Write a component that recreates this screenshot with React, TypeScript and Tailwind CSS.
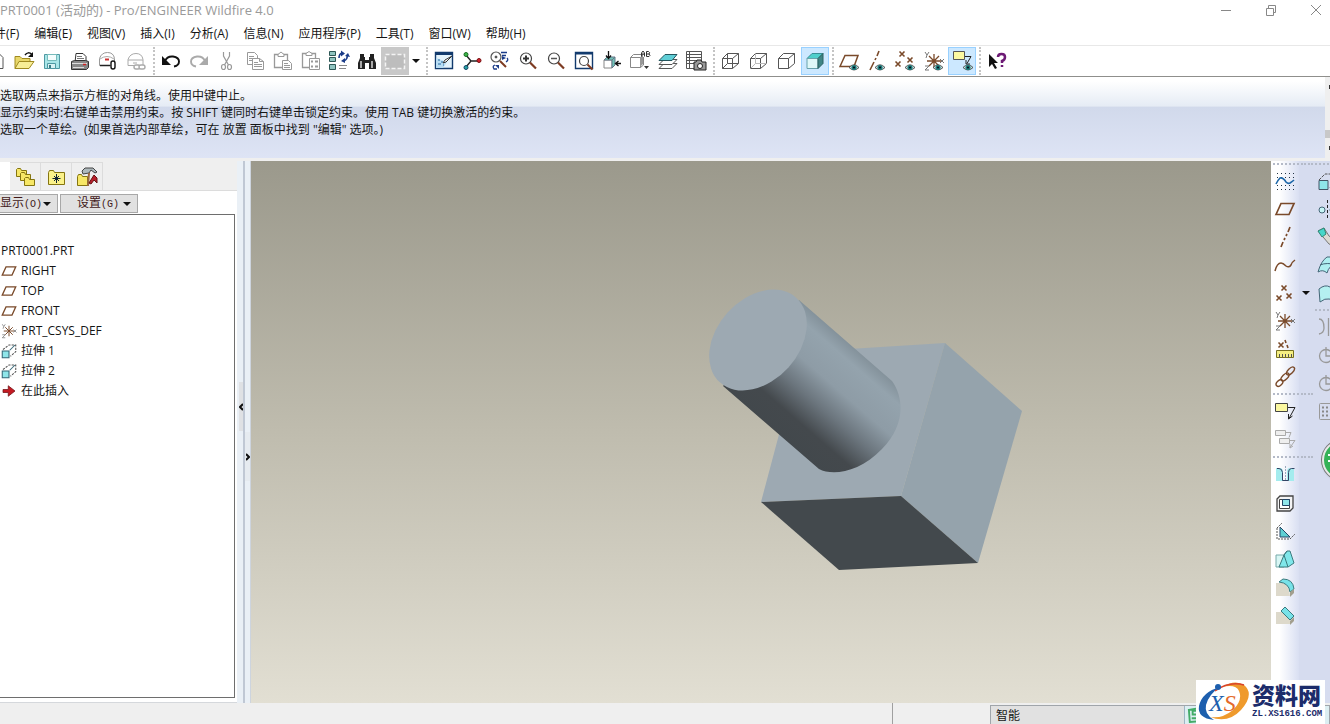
import type { ReactNode } from 'react';
import { clsx } from 'clsx';

interface IconProps {
    children: ReactNode;
    className?: string;
}

// Shared 24x24 canvas for every toolbar glyph
const Icon = ({ children, className }: IconProps) => (
    <svg
        viewBox="0 0 24 24"
        className={clsx('shrink-0', className ?? 'size-6')}
        fill="none"
        stroke="#555"
        strokeWidth="1"
        aria-hidden="true"
    >
        {children}
    </svg>
);

const BROWN = '#7a4a2a';

const Eye = () => (
    <g stroke="none">
        <path d="M9 18.5q5-5.500 10 0q-5 5-10 0z" fill="#cfe3e3" stroke="#333" strokeWidth=".8" />
        <circle cx="14" cy="18.500" r="2.600" fill="#1d7a78" />
        <circle cx="14" cy="18.500" r="1.100" fill="#012" />
    </g>
);

const Cross = ({ x, y, color = BROWN }: { x: number; y: number; color?: string }) => (
    <path d={`M${x - 2.5} ${y - 2.5}l5 5m0-5l-5 5`} stroke={color} strokeWidth="1.600" />
);

const Csys = () => (
    <>
        <path d="M5 12h14M12 5v14M7 7l10 10M17 7L7 17" stroke={BROWN} strokeWidth="1.300" />
        <path d="M3 3l2 3 2-3M5 6l-1 3M3 17h4l-4 4h4M18 10l4 4m0-4l-4 4" stroke="#777" />
    </>
);

const WireCube = ({ hidden }: { hidden?: string }) => (
    <>
        <path d="M3.500 9.500h10v10h-10zM3.500 9.500l5-5h11v10l-6 5M13.500 9.500l6-5" stroke="#555" />
        {hidden && <path d="M8.500 4.500v10h11M8.500 14.500l-5 5" stroke={hidden} />}
    </>
);

const icons = {
    newFile: <path d="M6 4.500h9l4 4v11H6z" fill="#fff" />,
    open: (
        <>
            <path d="M3 19.500v-12h5l2 2h8v3" fill="#e9d86a" stroke="#a08a20" />
            <path d="M3 19.500l4-7h15l-5 7z" fill="#f8ee96" stroke="#a08a20" />
            <path d="M13 6q3-4 7-.5" stroke="#111" strokeWidth="1.500" />
            <path d="M21 3v5h-5z" fill="#111" stroke="none" />
        </>
    ),
    save: (
        <>
            <path d="M4.500 5.500h15v14h-15z" fill="#a9e6e8" stroke="#4f98a2" />
            <path d="M7.500 5.500h9v6h-9z" fill="#f4fdfd" stroke="#7bb" />
            <path d="M7.500 14.500h8v5h-8z" fill="#d8f2f3" stroke="#4f98a2" />
            <path d="M9 16h2v3H9z" fill="#3a7e88" stroke="none" />
        </>
    ),
    print: (
        <>
            <path d="M8 4.500h7l3 3v6H7z" fill="#fff" stroke="#333" />
            <path d="M9 7.500h5M9 9.500h7M8 11.500h8" stroke="#777" />
            <path d="M3.500 12.500l3-1h11l3 1v6l-2 2h-15z" fill="#888" stroke="#333" />
            <path d="M4 14.500h15M5 18.500h11" stroke="#ddd" />
            <path d="M15 15.500h3" stroke="#c22" strokeWidth="1.500" />
        </>
    ),
    mail: (
        <>
            <path d="M3.500 16.500v-7q2-6 8-6t7 6v7z" fill="#fff" stroke="#999" />
            <path d="M4 10q7-5 14 0" stroke="#aaa" />
            <path d="M4 16.500h10" stroke="#222" strokeWidth="1.500" />
            <path d="M9 10.500h4" stroke="#c33" strokeWidth="2" />
            <rect x="15" y="12" width="4" height="8" rx="2" fill="#fff" stroke="#111" strokeWidth="1.400" />
        </>
    ),
    mailLink: (
        <g stroke="#aaa">
            <path d="M4 16.500v-6q2-6 8-6t7 6v6z" fill="#fff" />
            <path d="M4 11h15M9 14h4" />
            <rect x="10" y="16" width="6" height="4" rx="2" fill="#fff" strokeWidth="1.400" />
            <rect x="15" y="16" width="6" height="4" rx="2" fill="#fff" strokeWidth="1.400" />
        </g>
    ),
    undo: (
        <>
            <path d="M6 12q2-5 8-4.500 6 1 6 5t-5 5" stroke="#111" strokeWidth="1.900" />
            <path d="M3 7v9h9z" fill="#111" stroke="none" />
        </>
    ),
    redo: (
        <>
            <path d="M18 12q-2-5-8-4.500-6 1-6 5t5 5" stroke="#aaa" strokeWidth="1.900" />
            <path d="M21 7v9h-9z" fill="#aaa" stroke="none" />
        </>
    ),
    cut: (
        <g stroke="#999" strokeWidth="1.200">
            <path d="M8.500 3v4l5 9M14.500 3v4l-5 9" />
            <ellipse cx="8.500" cy="18" rx="2" ry="2.500" />
            <ellipse cx="14.500" cy="18" rx="2" ry="2.500" />
        </g>
    ),
    copy: (
        <g stroke="#999">
            <path d="M4.500 3.500h7l3 3v9h-10z" fill="#fff" />
            <path d="M6 7.500h5M6 9.500h7M6 11.500h7" />
            <path d="M9.500 9.500h7l4 3v8h-11z" fill="#fff" />
            <path d="M16.500 9.500v3h4M11 13.500h4M11 15.500h8M11 17.500h8" />
        </g>
    ),
    paste: (
        <g stroke="#999">
            <path d="M3.500 5.500h13v13h-13z" fill="#fff" strokeWidth="1.300" />
            <path d="M7 7.500v-2l3-2.500 3 2.500v2z" fill="#fff" />
            <path d="M11.500 11.500h6l3 3v6h-9z" fill="#fff" />
            <path d="M13 14.500h4M13 16.500h6M13 18.500h6" />
        </g>
    ),
    pasteSpecial: (
        <g stroke="#999">
            <path d="M3.500 4.500h13v14h-13z" fill="#fff" strokeWidth="1.300" />
            <path d="M7 6.500v-2l3-2 3 2v2z" fill="#fff" />
            <path d="M10.500 9.500h10v11h-10z" fill="#fff" />
            <path d="M12 12.500h2m2 0h3M12 17.500h2m2 0h3" strokeWidth="2" />
        </g>
    ),
    regenerate: (
        <>
            <path d="M2.500 2.500h6v4h-6zM2.500 8.500h6v4h-6zM2.500 15.500h6v5h-6z" fill="#8fc4c0" stroke="#2c5755" />
            <path d="M12 16.500h8M12 19.500h7" stroke="#888" />
            <path d="M12 9q0-4 3-5M20 6q1 4-3 6" stroke="#1b3c88" strokeWidth="1.600" />
            <path d="M14 1.500l4 3-4 3zM18 7l3-3 2 4zM18 9v5l-4-2z" fill="#1b3c88" stroke="none" />
        </>
    ),
    find: (
        <g fill="#222" stroke="none">
            <path d="M5 5h4v3h1v3h4V8h1V5h4v4l2 5v6h-7v-6h-4v6H3v-6l2-5z" />
            <path d="M5 12h2v7H5zM16 12h2v7h-2z" fill="#aaa" />
        </g>
    ),
    selectBox: <path d="M2.500 5.500h19v14h-19z" stroke="#f4f4f4" strokeWidth="1.500" strokeDasharray="4 2" fill="#bdbdbd" />,
    repaint: (
        <>
            <path d="M3.500 3.500h17v16h-17z" fill="#e4f3fb" stroke="#123a6d" strokeWidth="1.400" />
            <path d="M3 3h18v3H3z" fill="#123a6d" stroke="none" />
            <path d="M4 9l11 4-4 6H4z" fill="#b7dcf3" stroke="none" />
            <path d="M20 7l-6 6-3 1 2-3z" fill="#fff" stroke="#333" />
            <path d="M6 11h2m1 2h2m-5 2h3m2 1h1" stroke="#246aa0" />
        </>
    ),
    spin: (
        <>
            <path d="M6 6l5 6-5 6M11 12h9" stroke="#222" strokeWidth="1.400" />
            <circle cx="6" cy="5.500" r="2" fill="#3db54a" stroke="#176b20" />
            <circle cx="6" cy="18.500" r="2" fill="#28a3a5" stroke="#146" />
            <circle cx="19" cy="11.500" r="2" fill="#d21f2c" stroke="#711" />
        </>
    ),
    orient: (
        <>
            <circle cx="8" cy="8" r="5" stroke="#555" strokeWidth="1.200" />
            <circle cx="8" cy="8" r="1" fill="#222" />
            <path d="M12 12l6 6" stroke="#7d3b22" strokeWidth="2" />
            <path d="M13 3.500h6M14 6.500h4M19 9q2 2-1 4M7 16q-3 1-1 4l3 0" stroke="#1b3c88" strokeWidth="1.300" />
            <path d="M14 7v4l4-2zM7 16h4v4z" fill="#1b3c88" stroke="none" />
        </>
    ),
    zoomIn: (
        <>
            <circle cx="10" cy="9.500" r="5.500" stroke="#444" strokeWidth="1.200" />
            <path d="M7 9.500h6M10 6.500v6" stroke="#333" strokeWidth="2" />
            <path d="M14 13.500l6 6" stroke="#7d3b22" strokeWidth="2.200" />
        </>
    ),
    zoomOut: (
        <>
            <circle cx="10" cy="9.500" r="5.500" stroke="#444" strokeWidth="1.200" />
            <path d="M7 9.500h6" stroke="#555" strokeWidth="1.500" />
            <path d="M14 13.500l6 6" stroke="#7d3b22" strokeWidth="2.200" />
        </>
    ),
    refit: (
        <>
            <path d="M3.500 3.500h17v16h-17z" fill="#fff" stroke="#123a6d" strokeWidth="1.400" />
            <path d="M3 3h18v2.500H3z" fill="#123a6d" stroke="none" />
            <circle cx="12" cy="12" r="4.500" stroke="#444" strokeWidth="1.200" />
            <path d="M15.500 15.500l5 5" stroke="#7d3b22" strokeWidth="2" />
        </>
    ),
    reorient: (
        <>
            <path d="M4 11h8v8H4z" fill="#fff" stroke="#888" />
            <path d="M4 11l3-3h8l-3 3zM12 11l3-3v8l-3 3z" fill="#6fc5b8" stroke="#678" />
            <path d="M8.500 2v7M6 6.500l2.500 3 2.500-3M21 14.500h-5M18.500 12l-3 2.500 3 2.500" stroke="#111" strokeWidth="1.300" />
        </>
    ),
    savedViews: (
        <>
            <path d="M2.500 8.500h10v10h-10zM2.500 8.500l3-3h10l-3 3M15.500 8v8l-3 2.500" fill="#fff" stroke="#888" />
            <path d="M12 9l3-3v9l-3 3z" fill="#999" stroke="none" />
            <path d="M13.500 7.500V4l1.500-2 1.500 2v3.500M13.500 5h3M18.500 2.500v5H21q2-1 0-2.500 1.500-1.500-.5-2.500zM18.500 5H21" stroke="#333" />
            <path d="M16 17h5l-2.500 3z" fill="#333" stroke="none" />
        </>
    ),
    layers: (
        <>
            <path d="M3 19.500l5-5h13l-5 5z" fill="#fff" stroke="#555" />
            <path d="M3 15.500l5-5h13l-5 5z" fill="#fff" stroke="#555" />
            <path d="M3 11.500l6-6h12l-5 6z" fill="#5fced6" stroke="#24565e" />
        </>
    ),
    viewManager: (
        <>
            <path d="M2.500 2.500h15v17h-15zM2 5.500h15M2 8.500h15M2 11.500h15M2 14.500h8M5.500 2v17" stroke="#555" />
            <path d="M10 13h2l1-2h4l1 2h4v8H10z" fill="#999" stroke="#222" />
            <circle cx="16" cy="17" r="2.500" fill="#fff" stroke="#222" />
        </>
    ),
    wireframe: <WireCube hidden="#555" />,
    hiddenLine: <WireCube hidden="#bbb" />,
    noHidden: <WireCube />,
    shaded: (
        <>
            <path d="M4 9.500l5-5h11l-5 5z" fill="#4fcfcb" stroke="#3a8f96" />
            <path d="M4 9.500h11v10H4z" fill="#dff8f8" stroke="#68a2ac" />
            <path d="M15 9.500l5-5v10l-5 5z" fill="#3f8585" stroke="#2a6060" />
        </>
    ),
    planeEye: (
        <>
            <path d="M2 17.500l5-11h13l-4 11z" stroke={BROWN} strokeWidth="1.500" />
            <g transform="translate(2)"><Eye /></g>
        </>
    ),
    axisEye: (
        <>
            <path d="M13 2l-2 5m-1 2l-1 2m-1 2l-4 8" stroke={BROWN} strokeWidth="1.600" />
            <Eye />
        </>
    ),
    pointEye: (
        <>
            <Cross x={8} y={5} />
            <Cross x={4} y={15} />
            <Cross x={16} y={11} />
            <g transform="translate(2)"><Eye /></g>
        </>
    ),
    csysEye: (
        <>
            <Csys />
            <g transform="translate(2)"><Eye /></g>
        </>
    ),
    noteEye: (
        <>
            <path d="M3.500 2.500h11v8h-11z" fill="#fbf8a0" stroke="#555" />
            <path d="M15 7.500h6l-4 7M16 11v4h4" stroke="#222" />
            <g transform="translate(4)"><Eye /></g>
        </>
    ),
    help: (
        <>
            <path d="M4 5v13l3-3 3 5 2-1-3-5h4z" fill="#111" stroke="none" />
            <path d="M13 8q0-3 3.500-3t3.500 3-3 4v2M17 16v2" stroke="#6d1a75" strokeWidth="2.500" />
        </>
    ),
    sketch: (
        <>
            <path d="M4 4.500h17M4 8.500h17M4 16.500h17M4 20.500h17" stroke="#234" strokeDasharray="1 3" />
            <path d="M3 15q2-4 4-6 3-1 6 4 2 2 4 1 3-2 4-3" stroke="#1c66a8" strokeWidth="1.600" />
        </>
    ),
    plane: <path d="M3 17.500l5-11h13l-5 11z" stroke={BROWN} strokeWidth="1.700" />,
    axis: <path d="M17 2l-2 5m-1 2l-1 2m-1 2l-1 2m-1 2l-2 5" stroke={BROWN} strokeWidth="1.700" />,
    curve: <path d="M2 18q2-8 6-8 2 0 5 3 3 2 5-1 1-3 4-5" stroke={BROWN} strokeWidth="1.500" />,
    points: (
        <>
            <Cross x={11} y={7} />
            <Cross x={6} y={17} />
            <Cross x={16} y={15} />
        </>
    ),
    csys: <Csys />,
    analysis: (
        <>
            <Cross x={8} y={8} />
            <path d="M12 3l1 3m1 2l1 3" stroke={BROWN} strokeWidth="1.600" />
            <path d="M3.500 13.500h17v7h-17z" fill="#f5ef82" stroke="#777020" />
            <path d="M6.500 17v3m3-3v3m3-3v3m3-3v3m3-3v3" stroke="#555" />
        </>
    ),
    chain: (
        <g stroke={BROWN} strokeWidth="1.400">
            <ellipse cx="6.500" cy="18" rx="4" ry="2.500" transform="rotate(-45 6.500 18)" />
            <ellipse cx="12" cy="12" rx="5" ry="2.500" transform="rotate(-45 12 12)" />
            <ellipse cx="17.500" cy="6" rx="5" ry="2.500" transform="rotate(-45 17.500 6)" />
        </g>
    ),
    note: (
        <>
            <path d="M2.500 4.500h12v8h-12z" fill="#fbf8a0" stroke="#444" />
            <path d="M15 8.500h7l-6 11M15.500 15v5l4-3" stroke="#222" />
        </>
    ),
    noteCopy: (
        <g stroke="#aaa">
            <path d="M2.500 3.500h10v5h-10zM6.500 11.500h10v5h-10z" fill="#eee" />
            <path d="M13 5.500h5l-2 5M17 13.500h5l-5 7M17 17v4l3-2" />
        </g>
    ),
    hole: (
        <>
            <path d="M3 5h4q3 0 3 4v9H3zM21 5h-4q-3 0-3 4v9h7z" fill="#a4ecee" stroke="none" />
            <path d="M4 5.500h2q3 0 3.500 4v8h6v-8q0-4 3-4h3" stroke="#346" />
            <path d="M12.500 3v14" stroke="#9ab" strokeDasharray="2 1" />
        </>
    ),
    shell: (
        <>
            <path d="M4 8l3-3h13v12l-3 3H4z" fill="#f4f4f4" stroke="#444" strokeWidth="1.300" />
            <path d="M6.500 8.500h10v9h-10z" fill="#fff" stroke="#444" />
            <path d="M9.500 8.500h7v6h-7z" fill="#8fe6ea" stroke="#246" />
        </>
    ),
    rib: (
        <>
            <path d="M7 8v10h10z" fill="#5ed0d4" stroke="#246" />
            <path d="M4 9v11h13l5-5M4 9l5-5" stroke="#555" strokeDasharray="2 1" />
        </>
    ),
    draft: (
        <>
            <path d="M3 8h8v12H3z" fill="#d8f6f4" stroke="#7aa" />
            <path d="M11 8l3-4h3l4 12-6 4H6z" fill="#7fe7ea" stroke="#3a7a7e" />
            <path d="M11 8l4 12M14 4l-3 4" stroke="#3a7a7e" />
        </>
    ),
    round: (
        <>
            <path d="M3 8h7q6 2 7 13H3z" fill="#ddd9cb" stroke="none" />
            <path d="M6 7l4-3q10 0 11 10l-4 3q-1-9-11-10z" fill="#77e2e8" stroke="#3a7a7e" />
            <path d="M17 17l4-3v4l-4 4z" fill="#a39f8e" stroke="none" />
        </>
    ),
    chamfer: (
        <>
            <path d="M3 9h6l8 8v4H3z" fill="#ddd9cb" stroke="none" />
            <path d="M8 8l4-4 9 9-4 4z" fill="#77e2e8" stroke="#3a7a7e" />
            <path d="M17 18l4-4v4l-4 4z" fill="#a39f8e" stroke="none" />
        </>
    ),
    extrude: (
        <>
            <path d="M4 11.500h9v9H4z" fill="#8fe6ea" stroke="#456" />
            <path d="M4 11l6-6h11v7l-7 7" stroke="#555" strokeDasharray="3 1" />
        </>
    ),
    treeExtrude: (
        <>
            <path d="M3 12h9v9H3z" fill="#8fe6ea" stroke="#367" strokeWidth="1.400" />
            <path d="M4 10l8-6h9v9l-7 6" stroke="#555" strokeDasharray="3 1.500" strokeWidth="1.400" />
            <path d="M13 11l7-7" stroke="#367" strokeWidth="1.400" />
        </>
    ),
    revolve: (
        <>
            <circle cx="7" cy="13" r="3" fill="#c6f4f5" stroke="#467" />
            <path d="M12.500 3v18" stroke="#222" strokeDasharray="3 2" />
            <circle cx="18" cy="13" r="3" stroke="#467" />
        </>
    ),
    sweep: (
        <>
            <path d="M3 6l6-3 5 8 8 5v6l-8-3z" fill="#dcd9d2" stroke="#777" />
            <path d="M3 6l6-3 2 6-4 3z" fill="#45d7ca" stroke="#387" />
        </>
    ),
    boundary: (
        <>
            <path d="M3 19q3-11 9-15h10v7q-8 1-10 9-4-4-9-1z" fill="#aff0f0" stroke="#467" />
            <path d="M5 12q7-3 17 0" stroke="#467" />
        </>
    ),
    blend: <path d="M4 8q6-5 11-2 4 1 7-1v12q-4 3-8 1-4-1-9 3z" fill="#b4f0f0" stroke="#467" />,
    mirror: <path d="M4 4q5 0 5 9 0 5-5 6M13.500 3v18" stroke="#999" strokeWidth="1.300" />,
    merge: (
        <g stroke="#999">
            <circle cx="11" cy="13" r="6.500" strokeWidth="1.300" />
            <path d="M11 4v9h11" strokeWidth="1.300" />
        </g>
    ),
    pattern: (
        <>
            <rect x="4.500" y="4.500" width="18" height="16" rx="1" stroke="#999" />
            <path d="M7 8.500h14M7 12.500h14M7 16.500h14" stroke="#888" strokeWidth="2" strokeDasharray="2 2" />
        </>
    ),
    folders: (
        <g fill="#f7e766" stroke="#857510">
            <path d="M3.500 11.500v-7l1-1h3l1 2h5v6z" />
            <path d="M7.500 15.500v-7l1-1h3l1 2h5v6z" />
            <path d="M11.500 20.500v-7l1-1h3l1 2h5v6z" />
        </g>
    ),
    favorites: (
        <>
            <path d="M4.500 19.500v-12l1-2h4l1 2h10v12z" fill="#fbf28a" stroke="#857510" />
            <path d="M12.500 9v9M8.500 13.500h8M10 11l5 5m0-5l-5 5" stroke="#123" />
        </>
    ),
    connections: (
        <>
            <path d="M2.500 20.500v-9l1-2h3l1 2h5v9z" fill="#f7e766" stroke="#857510" />
            <path d="M7 6l3-3h8l4 4-2 1-4-3-2 3-6 1z" fill="#aeb9bc" stroke="#444" />
            <path d="M14 8l-1 13" stroke="#9a6840" strokeWidth="2" />
            <path d="M14 18l5-8 3 3v5l-3-3-3 4z" fill="#b91f2c" stroke="#611" />
        </>
    ),
    insertHere: <path d="M4 10h7V5l9 7-9 7v-5H4z" fill="#c41a22" stroke="#701015" />,
};

type IconName = keyof typeof icons;

const menuItems = [
    '文件(F)', '编辑(E)', '视图(V)', '插入(I)', '分析(A)', '信息(N)', '应用程序(P)', '工具(T)', '窗口(W)', '帮助(H)',
];

const messages = [
    '选取两点来指示方框的对角线。使用中键中止。',
    '显示约束时:右键单击禁用约束。按 SHIFT 键同时右键单击锁定约束。使用 TAB 键切换激活的约束。',
    '选取一个草绘。(如果首选内部草绘，可在 放置 面板中找到 "编辑" 选项。)',
];

const fileTools: IconName[] = ['newFile', 'open', 'save', 'print', 'mail', 'mailLink'];
const editTools: IconName[] = ['undo', 'redo', 'cut', 'copy', 'paste', 'pasteSpecial', 'regenerate', 'find', 'selectBox'];
const viewTools: IconName[] = ['repaint', 'spin', 'orient', 'zoomIn', 'zoomOut', 'refit', 'reorient', 'savedViews', 'layers', 'viewManager'];
const displayTools: IconName[] = ['wireframe', 'hiddenLine', 'noHidden', 'shaded'];
const datumTools: IconName[] = ['planeEye', 'axisEye', 'pointEye', 'csysEye', 'noteEye'];

const treeItems: { label: string; icon: IconName }[] = [
    { label: 'RIGHT', icon: 'plane' },
    { label: 'TOP', icon: 'plane' },
    { label: 'FRONT', icon: 'plane' },
    { label: 'PRT_CSYS_DEF', icon: 'csys' },
    { label: '拉伸 1', icon: 'treeExtrude' },
    { label: '拉伸 2', icon: 'treeExtrude' },
    { label: '在此插入', icon: 'insertHere' },
];

const ToolButton = ({ name }: { name: IconName }) => (
    <button
        type="button"
        aria-label={name}
        className={clsx(
            'flex size-7 shrink-0 items-center justify-center',
            (name === 'shaded' || name === 'noteEye') && 'border border-[#99d1ff] bg-[#cce8ff]',
            name === 'selectBox' && 'bg-[#c8c8c8]'
        )}
    >
        <Icon>{icons[name]}</Icon>
    </button>
);

const ToolGroup = ({ names }: { names: IconName[] }) => (
    <>
        {names.map((name) => (
            <ToolButton key={name} name={name} />
        ))}
    </>
);

const Separator = () => (
    <div className="flex h-7 w-[7px] shrink-0 justify-center">
        <div className="border-l-2 border-dotted border-[#c4c4c4]" />
    </div>
);

const DotRow = ({ className }: { className?: string }) => (
    <div className={clsx('flex shrink-0 items-center pl-0.5', className)}>
        <div className="w-full border-t-2 border-dotted border-[#b4bac8]" />
    </div>
);

const Caret = () => (
    <svg viewBox="0 0 8 4" className="h-1 w-2 shrink-0" aria-hidden="true">
        <path d="M0 0h8L4 4z" fill="#111" />
    </svg>
);

const TitleBar = () => (
    <header className="flex h-[22px] shrink-0 items-center justify-between">
        <h1 className="text-[13px] whitespace-nowrap text-[#9a9a9a]">PRT0001 (活动的) - Pro/ENGINEER Wildfire 4.0</h1>
        <div className="flex gap-[33px] pr-2">
            <button type="button" aria-label="最小化">
                <svg viewBox="0 0 12 12" className="size-3" stroke="#888"><path d="M1 5.500h10" /></svg>
            </button>
            <button type="button" aria-label="还原">
                <svg viewBox="0 0 12 12" className="size-3" fill="none" stroke="#888"><path d="M1.500 3.500h7v7h-7zM3.500 3V.5h7v7H9" /></svg>
            </button>
            <button type="button" aria-label="关闭">
                <svg viewBox="0 0 12 12" className="size-3" stroke="#888"><path d="M1 0l10 10M11 0L1 10" /></svg>
            </button>
        </div>
    </header>
);

const MessageArea = () => (
    <section className="flex h-[82px] shrink-0 border-t border-[#8f8f8c] text-xs">
        <div className="flex-1 bg-linear-to-b from-white from-5% via-[#e6ecf5] via-35% to-[#e6ecf5] to-35%">
            <div className="h-full bg-linear-to-b from-transparent from-36% via-[#d1d9eb] via-37% to-[#dee4f5] pt-2.5">
                {messages.map((message) => (
                    <p key={message} className="h-[17px] leading-[17px] whitespace-nowrap">{message}</p>
                ))}
            </div>
        </div>
        <div className="flex w-[5px] flex-col justify-between bg-[#efefef] py-2">
            <span className="ml-1 h-1 bg-[#333]" />
            <span className="mt-8 h-2 bg-[#c8c8c8]" />
            <span className="ml-1 h-1 bg-[#333]" />
        </div>
    </section>
);

const ModelTree = () => (
    <aside className="flex w-[237px] shrink-0 flex-col border-b border-[#d5d8dc] bg-white">
        <div className="flex h-[30px] shrink-0 items-end border-b border-[#dcdcdc] bg-[#efefef]">
            <button type="button" aria-label="模型树" className="h-7 w-2.5 bg-white" />
            {(['folders', 'favorites', 'connections'] as IconName[]).map((name) => (
                <button
                    key={name}
                    type="button"
                    aria-label={name}
                    className="flex h-7 w-[31px] items-center justify-center border-t border-r border-[#dcdcdc]"
                >
                    <Icon>{icons[name]}</Icon>
                </button>
            ))}
        </div>
        <div className="flex h-[23px] shrink-0 items-center gap-0.5 pt-0.5 text-xs text-[#401818]">
            <button type="button" className="flex h-[19px] w-[58px] items-center justify-between border border-l-0 border-[#a8a8a8] bg-[#e1e1e1] pr-1.5 whitespace-nowrap">
                <span>显示<span className="font-['Liberation_Mono'] text-[10px]">(O)</span></span>
                <Caret />
            </button>
            <button type="button" className="flex h-[19px] w-[78px] items-center justify-between border border-[#a8a8a8] bg-[#e1e1e1] pr-1.5 pl-4 whitespace-nowrap">
                <span>设置<span className="font-['Liberation_Mono'] text-[10px]">(G)</span></span>
                <Caret />
            </button>
        </div>
        <div className="mr-0.5 mb-1 flex-1 border border-l-0 border-[#6e6e6e] pt-[26px] text-xs">
            <p className="h-5 pl-px leading-5">PRT0001.PRT</p>
            <ul>
                {treeItems.map(({ label, icon }) => (
                    <li key={label} className="flex h-5 items-center gap-[3px] leading-5">
                        <Icon className="size-[18px]">{icons[icon]}</Icon>
                        {label}
                    </li>
                ))}
            </ul>
        </div>
    </aside>
);

// The two sashes between the tree and the graphics window
const Splitter = () => (
    <div className="flex w-3.5 shrink-0 bg-[#eaf0f6]">
        <div className="flex w-2 flex-col border-r-2 border-[#c0c8d4] pt-[221px]">
            <button type="button" aria-label="折叠" className="ml-0.5 flex h-[49px] items-center justify-center bg-[#dfe1e4]">
                <svg viewBox="0 0 4 8" className="h-2 w-1" fill="none" stroke="#111" strokeWidth="2"><path d="M4 1L1 4l3 3" /></svg>
            </button>
        </div>
        <div className="flex w-1.5 flex-col border-r border-[#cdd4de] pt-[271px]">
            <button type="button" aria-label="展开" className="flex h-[49px] items-center justify-center bg-[#e6ebf0]">
                <svg viewBox="0 0 4 8" className="h-2 w-1" fill="none" stroke="#111" strokeWidth="2"><path d="M0 1l3 3-3 3" /></svg>
            </button>
        </div>
    </div>
);

const ModelView = () => (
    <main className="min-w-0 flex-1 bg-linear-to-b from-[#9b998c] via-[#bfbcae] to-[#e2dfd3]">
        <svg viewBox="0 0 1020 542" preserveAspectRatio="xMidYMid slice" className="size-full" role="img" aria-label="PRT0001">
            <defs>
                <linearGradient id="shaft" gradientUnits="userSpaceOnUse" x1="549" y1="139" x2="471" y2="229">
                    <stop offset="0" stopColor="#83919a" />
                    <stop offset=".12" stopColor="#94a3ad" />
                    <stop offset=".36" stopColor="#8e9ca6" />
                    <stop offset=".57" stopColor="#6b757d" />
                    <stop offset=".78" stopColor="#44494d" />
                    <stop offset="1" stopColor="#42484c" />
                </linearGradient>
            </defs>
            <path d="M550 191L694 182L650 335L510 341z" fill="#9da9b2" />
            <path d="M694 182L771 250L727 402L650 335z" fill="#95a3ac" />
            <path d="M510 341L650 335L727 402L588 409z" fill="#43494d" />
            <path d="M548 139L641 220C655 240 652 267 631 288C608 312 581 315 568 308L472 225z" fill="url(#shaft)" />
            <ellipse cx="507" cy="179" rx="57" ry="41" transform="rotate(-48 507 179)" fill="#9da9b2" />
        </svg>
    </main>
);

const FeatureBar = () => (
    <nav aria-label="特征" className="flex w-[59px] shrink-0 overflow-hidden bg-[#d6dcef]">
        <div className="w-7 shrink-0 bg-linear-to-r from-white from-30% to-[#d9dff2]">
            <DotRow className="h-1.5" />
            <ToolGroup names={['sketch', 'plane', 'axis', 'curve', 'points', 'csys', 'analysis', 'chain']} />
            <DotRow className="h-1.5" />
            <ToolGroup names={['note', 'noteCopy']} />
            <DotRow className="h-2" />
            <ToolGroup names={['hole', 'shell', 'rib', 'draft', 'round', 'chamfer']} />
        </div>
        <div className="w-3.5 shrink-0">
            <DotRow className="h-1.5" />
            <button type="button" aria-label="更多基准点" className="mt-28 flex h-7 w-3.5 items-center justify-center">
                <Caret />
            </button>
            <DotRow className="mt-[84px] h-1.5" />
            <DotRow className="mt-14 h-2" />
        </div>
        <div className="w-7 shrink-0">
            <DotRow className="h-1.5" />
            <ToolGroup names={['extrude', 'revolve', 'sweep', 'boundary', 'blend']} />
            <DotRow className="h-1.5" />
            <ToolGroup names={['mirror', 'merge']} />
            <ToolButton name="merge" />
            <ToolButton name="pattern" />
        </div>
    </nav>
);

const Watermark = () => (
    <div className="absolute right-[5px] bottom-0 flex h-11 w-[129px] items-center bg-white">
        <svg viewBox="0 0 56 44" className="h-11 w-14 shrink-0" fill="none" aria-hidden="true">
            <path d="M24 7Q6 12 3 26 1 38 18 40 8 34 10 25 13 14 24 7z" fill="#1d5fae" />
            <path d="M14 37Q32 44 45 30 59 14 48 5 39-1 26 7 40 4 43 11 47 20 37 30 26 39 14 37z" fill="#ef9a2c" />
            <path d="M19 11Q33 1 48 5" stroke="#d8432c" strokeWidth="1.500" />
            <circle cx="22" cy="7" r="3" fill="#1d5fae" />
            <text x="13" y="31" className="font-['Liberation_Serif'] text-2xl italic" fill="#1d5fae">
                X<tspan fill="#e46a2c">S</tspan>
            </text>
        </svg>
        <div className="flex h-full flex-col justify-between pb-2 text-[#1c2c6b]">
            <p className="text-[23px] leading-[30px] font-black whitespace-nowrap">资料网</p>
            <p className="font-['Liberation_Mono'] text-[9px] leading-none font-bold whitespace-nowrap">ZL.XS1616.COM</p>
        </div>
    </div>
);

const StatusBar = () => (
    <footer className="flex h-[21px] shrink-0 justify-end bg-[#efefef]">
        <div className="w-[98px] border-l border-[#a0a0a0]" />
        <div className="mt-0.5 flex w-[340px] border border-b-0 border-[#a0a5aa] bg-[#e1e1e1] text-xs">
            <span className="flex-1 pl-[5px] leading-5">智能</span>
            <div className="flex w-[145px] items-center gap-2 border-l border-[#9fb6c4] bg-[#dceef2] pl-0.5">
                <svg viewBox="0 0 17 17" className="size-4" fill="none"><path d="M2 3l12-2v14l-11 1zM13 4H6v4h6v4H5" stroke="#43ac68" strokeWidth="2" /></svg>
                <span className="size-3 bg-[#4a86b5]" />
                <span className="size-3 rounded-full bg-[#4a86b5]" />
            </div>
        </div>
    </footer>
);

export default function App() {
    return (
        <div className="relative flex h-screen min-h-[640px] w-full flex-col overflow-hidden bg-white font-['Open_Sans','Noto_Sans_CJK_SC',sans-serif] text-[#151515]">
            <TitleBar />
            <nav aria-label="菜单" className="-ml-[25px] flex h-[23px] shrink-0 items-center gap-px text-xs">
                {menuItems.map((item) => (
                    <button key={item} type="button" className="px-[7px] whitespace-nowrap">{item}</button>
                ))}
            </nav>
            <div className="flex h-[31px] shrink-0 items-center overflow-hidden border-t border-[#e8e8e8]">
                <div className="-ml-[18px] flex items-center">
                    <ToolGroup names={fileTools} />
                    <Separator />
                    <ToolGroup names={editTools} />
                    <button type="button" aria-label="选取选项" className="flex h-7 w-3.5 items-center justify-center">
                        <Caret />
                    </button>
                    <Separator />
                    <ToolGroup names={viewTools} />
                    <Separator />
                    <ToolGroup names={displayTools} />
                    <Separator />
                    <ToolGroup names={datumTools} />
                    <Separator />
                    <ToolButton name="help" />
                </div>
            </div>
            <MessageArea />
            <div className="flex min-h-0 flex-1 bg-[#efefef] pt-[3px]">
                <ModelTree />
                <Splitter />
                <ModelView />
                <FeatureBar />
            </div>
            <StatusBar />
            <Watermark />
            {/* Floating desktop widget docked to the right edge */}
            <div className="absolute top-[440px] -right-8 size-10 rounded-full border-2 border-[#e8e8e8] bg-[#35b257] shadow ring-1 ring-[#777]">
                <span className="mt-3 ml-1 block h-0.5 w-4 bg-white" />
                <span className="mt-1 ml-1 block h-0.5 w-4 bg-white" />
            </div>
        </div>
    );
}
